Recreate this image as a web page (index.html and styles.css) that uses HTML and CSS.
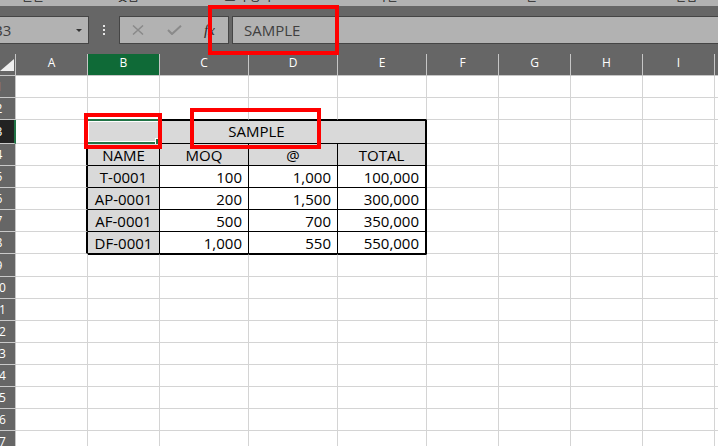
FILE: index.html
```html
<!DOCTYPE html>
<html>
<head>
    <title>Sheet1 - Excel</title>
    <link rel="stylesheet" href="styles.css">
</head>
<body>
    <!-- bottom edge of the ribbon, group labels cut off -->
    <div class="ribbon-tail">
        <span class="group g1">글꼴</span>
        <span class="group g2">맞춤</span>
        <span class="group g3">표시 형식</span>
        <span class="group g4">스타일</span>
        <span class="group g5">셀</span>
        <span class="group g6">편집</span>
    </div>

    <!-- name box + formula bar -->
    <div class="formula-area">
        <div class="name-box">
            <span class="ref">B3</span>
            <span class="caret"></span>
        </div>
        <div class="grip">
            <span></span><span></span><span></span>
        </div>
        <div class="edit-buttons">
            <svg class="btn-cancel" width="12" height="10" viewBox="0 0 12 10">
                <path d="M1 0.5 L11 9.5 M11 0.5 L1 9.5" stroke="#8a8a8a" stroke-width="1.5" fill="none"/>
            </svg>
            <svg class="btn-enter" width="15" height="10" viewBox="0 0 15 10">
                <path d="M1 5 L5 9 L14 0.8" stroke="#8a8a8a" stroke-width="2" fill="none"/>
            </svg>
            <span class="btn-fx">fx</span>
        </div>
        <div class="formula-input">SAMPLE</div>
    </div>

    <!-- sheet -->
    <div class="sheet">
        <div class="row head-row">
            <div class="corner">
                <svg width="15" height="21" viewBox="0 0 15 21">
                    <polygon points="0,17 14,17 14,5" fill="#efefef"/>
                </svg>
            </div>
            <div class="col-head">A</div>
            <div class="col-head active">B</div>
            <div class="col-head">C</div>
            <div class="col-head">D</div>
            <div class="col-head">E</div>
            <div class="col-head">F</div>
            <div class="col-head">G</div>
            <div class="col-head">H</div>
            <div class="col-head">I</div>
            <div class="col-head">J</div>
        </div>

        <div class="row">
            <div class="row-head"><span>1</span></div>
            <div class="cell"></div><div class="cell"></div><div class="cell"></div><div class="cell"></div><div class="cell"></div>
            <div class="cell"></div><div class="cell"></div><div class="cell"></div><div class="cell"></div><div class="cell"></div>
        </div>

        <div class="row">
            <div class="row-head"><span>2</span></div>
            <div class="cell"></div>
            <div class="cell cap"></div><div class="cell cap"></div><div class="cell cap"></div><div class="cell cap"></div>
            <div class="cell"></div><div class="cell"></div><div class="cell"></div><div class="cell"></div><div class="cell"></div>
        </div>

        <div class="row tall3">
            <div class="row-head active"><span>3</span></div>
            <div class="cell edge-r"></div>
            <div class="cell t title">SAMPLE</div>
            <div class="cell"></div><div class="cell"></div><div class="cell"></div><div class="cell"></div><div class="cell"></div>
        </div>

        <div class="row">
            <div class="row-head"><span>4</span></div>
            <div class="cell edge-r"></div>
            <div class="cell t">NAME</div>
            <div class="cell t">MOQ</div>
            <div class="cell t">@</div>
            <div class="cell t end">TOTAL</div>
            <div class="cell"></div><div class="cell"></div><div class="cell"></div><div class="cell"></div><div class="cell"></div>
        </div>

        <div class="row">
            <div class="row-head"><span>5</span></div>
            <div class="cell edge-r"></div>
            <div class="cell t">T-0001</div>
            <div class="cell t num">100</div>
            <div class="cell t num">1,000</div>
            <div class="cell t num end">100,000</div>
            <div class="cell"></div><div class="cell"></div><div class="cell"></div><div class="cell"></div><div class="cell"></div>
        </div>

        <div class="row">
            <div class="row-head"><span>6</span></div>
            <div class="cell edge-r"></div>
            <div class="cell t">AP-0001</div>
            <div class="cell t num">200</div>
            <div class="cell t num">1,500</div>
            <div class="cell t num end">300,000</div>
            <div class="cell"></div><div class="cell"></div><div class="cell"></div><div class="cell"></div><div class="cell"></div>
        </div>

        <div class="row">
            <div class="row-head"><span>7</span></div>
            <div class="cell edge-r"></div>
            <div class="cell t">AF-0001</div>
            <div class="cell t num">500</div>
            <div class="cell t num">700</div>
            <div class="cell t num end">350,000</div>
            <div class="cell"></div><div class="cell"></div><div class="cell"></div><div class="cell"></div><div class="cell"></div>
        </div>

        <div class="row">
            <div class="row-head"><span>8</span></div>
            <div class="cell edge-r"></div>
            <div class="cell t">DF-0001</div>
            <div class="cell t num">1,000</div>
            <div class="cell t num">550</div>
            <div class="cell t num end">550,000</div>
            <div class="cell"></div><div class="cell"></div><div class="cell"></div><div class="cell"></div><div class="cell"></div>
        </div>

        <div class="row tall9">
            <div class="row-head"><span>9</span></div>
            <div class="cell"></div>
            <div class="cell cap-top"></div><div class="cell cap-top"></div><div class="cell cap-top"></div><div class="cell cap-top"></div>
            <div class="cell"></div><div class="cell"></div><div class="cell"></div><div class="cell"></div><div class="cell"></div>
        </div>

        <div class="row">
            <div class="row-head"><span>10</span></div>
            <div class="cell"></div><div class="cell"></div><div class="cell"></div><div class="cell"></div><div class="cell"></div>
            <div class="cell"></div><div class="cell"></div><div class="cell"></div><div class="cell"></div><div class="cell"></div>
        </div>
        <div class="row">
            <div class="row-head"><span>11</span></div>
            <div class="cell"></div><div class="cell"></div><div class="cell"></div><div class="cell"></div><div class="cell"></div>
            <div class="cell"></div><div class="cell"></div><div class="cell"></div><div class="cell"></div><div class="cell"></div>
        </div>
        <div class="row">
            <div class="row-head"><span>12</span></div>
            <div class="cell"></div><div class="cell"></div><div class="cell"></div><div class="cell"></div><div class="cell"></div>
            <div class="cell"></div><div class="cell"></div><div class="cell"></div><div class="cell"></div><div class="cell"></div>
        </div>
        <div class="row">
            <div class="row-head"><span>13</span></div>
            <div class="cell"></div><div class="cell"></div><div class="cell"></div><div class="cell"></div><div class="cell"></div>
            <div class="cell"></div><div class="cell"></div><div class="cell"></div><div class="cell"></div><div class="cell"></div>
        </div>
        <div class="row">
            <div class="row-head"><span>14</span></div>
            <div class="cell"></div><div class="cell"></div><div class="cell"></div><div class="cell"></div><div class="cell"></div>
            <div class="cell"></div><div class="cell"></div><div class="cell"></div><div class="cell"></div><div class="cell"></div>
        </div>
        <div class="row">
            <div class="row-head"><span>15</span></div>
            <div class="cell"></div><div class="cell"></div><div class="cell"></div><div class="cell"></div><div class="cell"></div>
            <div class="cell"></div><div class="cell"></div><div class="cell"></div><div class="cell"></div><div class="cell"></div>
        </div>
        <div class="row">
            <div class="row-head"><span>16</span></div>
            <div class="cell"></div><div class="cell"></div><div class="cell"></div><div class="cell"></div><div class="cell"></div>
            <div class="cell"></div><div class="cell"></div><div class="cell"></div><div class="cell"></div><div class="cell"></div>
        </div>
        <div class="row">
            <div class="row-head"><span>17</span></div>
            <div class="cell"></div><div class="cell"></div><div class="cell"></div><div class="cell"></div><div class="cell"></div>
            <div class="cell"></div><div class="cell"></div><div class="cell"></div><div class="cell"></div><div class="cell"></div>
        </div>
    </div>

    <!-- active cell B3 -->
    <div class="selection"><span class="handle"></span></div>

    <!-- red annotation boxes -->
    <div class="mark mark-formula"></div>
    <div class="mark mark-cell"></div>
    <div class="mark mark-title"></div>
</body>
</html>
```

FILE: styles.css
```css
body {
    margin: 0;
    width: 718px;
    height: 446px;
    overflow: hidden;
    position: relative;
    background-color: #ffffff;
    font-family: "Open Sans", "Noto Sans CJK KR", sans-serif;
}

/* ribbon remains */
.ribbon-tail {
    height: 6px;
    background-color: #b2b2b2;
    display: flex;
    overflow: hidden;
}

.group {
    flex: none;
    text-align: center;
    font-family: "Noto Sans CJK KR", sans-serif;
    font-size: 12px;
    line-height: 12px;
    margin-top: -10px;
    color: #262626;
}

.g1 { width: 66px; }
.g2 { width: 124px; }
.g3 { width: 116px; }
.g4 { width: 150px; }
.g5 { width: 150px; }
.g6 { width: 160px; }

/* formula bar */
.formula-area {
    display: flex;
    height: 28px;
    padding: 10px 0;
    background-color: #666666;
}

.name-box {
    width: 91px;
    margin-left: -2px;
    box-sizing: border-box;
    border: 1px solid #454545;
    background-color: #b2b2b2;
    display: flex;
    align-items: center;
    overflow: hidden;
}

.name-box .ref {
    flex: 1;
    text-indent: -6px;
    font-size: 15px;
    color: #404040;
    white-space: nowrap;
}

.name-box .caret {
    width: 0;
    height: 0;
    border-left: 3px solid transparent;
    border-right: 3px solid transparent;
    border-top: 3px solid #333333;
    margin-right: 6px;
}

.grip {
    width: 30px;
    display: flex;
    flex-direction: column;
    align-items: center;
    justify-content: center;
    gap: 2px;
}

.grip span {
    width: 2px;
    height: 2px;
    background-color: #e6e6e6;
}

.edit-buttons {
    width: 110px;
    box-sizing: border-box;
    border: 1px solid #454545;
    background-color: #b2b2b2;
    display: flex;
    align-items: center;
}

.btn-cancel {
    margin-left: 12px;
}

.btn-enter {
    margin-left: 23px;
}

.btn-fx {
    margin-left: 22px;
    font-family: "Liberation Serif", serif;
    font-style: italic;
    font-size: 15px;
    color: #2b2b2b;
}

.formula-input {
    flex: 1;
    margin-left: 3px;
    margin-right: -2px;
    border: 1px solid #454545;
    background-color: #b2b2b2;
    padding-left: 11px;
    font-size: 15px;
    line-height: 26px;
    color: #404040;
}

/* grid */
.row {
    display: grid;
    grid-template-columns: 16px 72px 72px 89px 89px 89px 72px 72px 72px 72px 72px;
    height: 22px;
}

.row.tall3 {
    height: 24px;
}

.row.tall9 {
    height: 23px;
}

.corner,
.col-head,
.row-head,
.cell {
    box-sizing: border-box;
    overflow: hidden;
    white-space: nowrap;
    display: flex;
    align-items: center;
}

.corner {
    background-color: #666666;
    border-right: 1px solid #c6c6c6;
    border-bottom: 1px solid #c6c6c6;
}

.col-head {
    justify-content: center;
    padding-bottom: 4px;
    background-color: #666666;
    border-right: 1px solid #c6c6c6;
    border-bottom: 1px solid #c6c6c6;
    font-size: 12px;
    color: #ffffff;
}

.col-head.active {
    background-color: #0f6a37;
}

.row-head {
    background-color: #666666;
    border-right: 1px solid #c6c6c6;
    border-bottom: 1px solid #c9c9c9;
    font-size: 12px;
    color: #ffffff;
}

.row-head span {
    flex: none;
    width: 30px;
    margin-left: -16px;
    text-align: center;
}

.row-head.active {
    background-color: #222222;
    border-right: 2px solid #217346;
}

.cell {
    border-right: 1px solid #d4d4d4;
    border-bottom: 1px solid #d4d4d4;
    font-size: 15px;
    color: #000000;
}

/* outer frame of the table */
.cell.edge-r {
    border-right: 2px solid #000000;
}

.cell.cap {
    border-bottom-color: #000000;
}

.cell.cap-top {
    border-top: 1px solid #000000;
}

/* table body */
.cell.t {
    justify-content: center;
    background-color: #d9d9d9;
    border-right-color: #000000;
    border-bottom-color: #000000;
}

.cell.t.num {
    justify-content: flex-end;
    padding-right: 6px;
    background-color: #ffffff;
}

.cell.t.end {
    border-right-width: 2px;
}

.cell.title {
    grid-column: span 4;
    border-top: 1px solid #000000;
    border-right-width: 2px;
    padding-bottom: 2px;
}

/* active cell */
.selection {
    position: absolute;
    left: 86px;
    top: 119px;
    width: 75px;
    height: 25px;
    box-sizing: border-box;
    border: 2px solid #217346;
    box-shadow: inset 0 0 0 1px #ffffff;
}

.selection .handle {
    position: absolute;
    right: -2px;
    bottom: -2px;
    width: 5px;
    height: 5px;
    background-color: #217346;
    border-left: 1px solid #ffffff;
    border-top: 1px solid #ffffff;
}

/* annotations */
.mark {
    position: absolute;
    box-sizing: border-box;
    border: 4px solid #ff0000;
}

.mark-formula {
    left: 208px;
    top: 5px;
    width: 131px;
    height: 50px;
}

.mark-cell {
    left: 84px;
    top: 113px;
    width: 78px;
    height: 36px;
}

.mark-title {
    left: 190px;
    top: 108px;
    width: 131px;
    height: 41px;
}
```
